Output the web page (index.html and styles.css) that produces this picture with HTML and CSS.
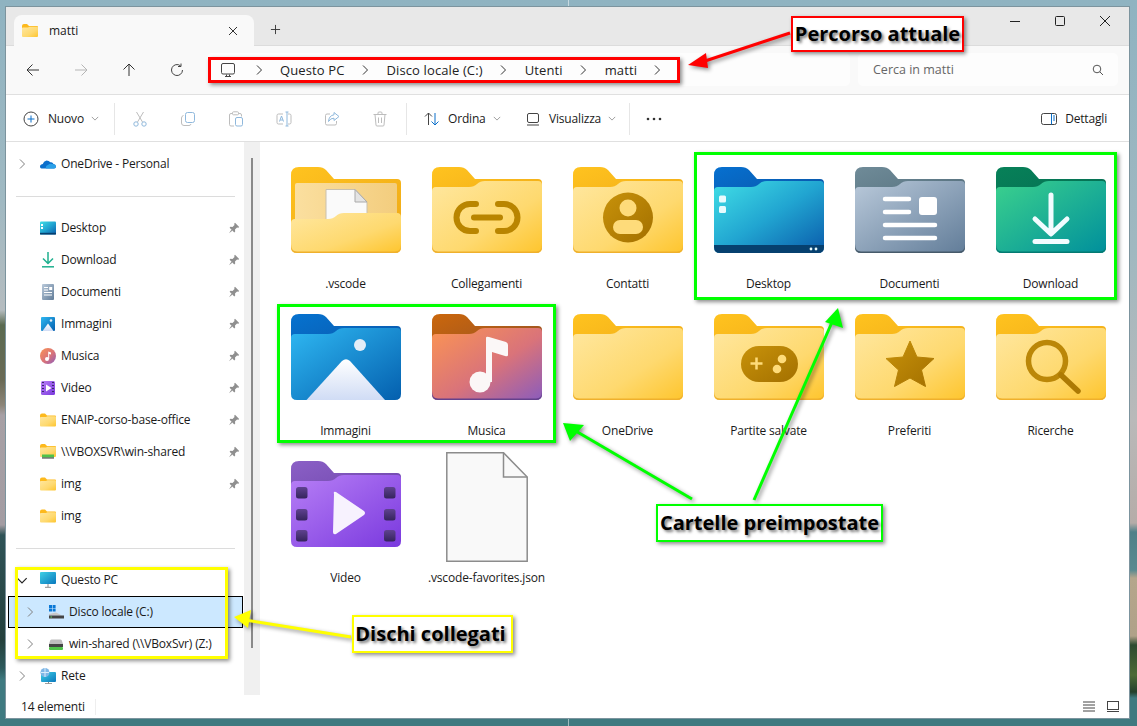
FILE: index.html
```html
<!DOCTYPE html>
<html lang="it">
<head>
<meta charset="utf-8">
<title>matti</title>
<link rel="stylesheet" href="styles.css">
</head>
<body>
<svg class="defs" aria-hidden="true">
  <defs>
    <linearGradient id="yb" x1="0" y1="0" x2="1" y2="1"><stop offset="0" stop-color="#ffc31f"/><stop offset="1" stop-color="#efa917"/></linearGradient>
    <linearGradient id="yf" x1="0" y1="0" x2="1" y2="1"><stop offset="0" stop-color="#ffe79f"/><stop offset=".6" stop-color="#fed96f"/><stop offset="1" stop-color="#fec52d"/></linearGradient>
    <linearGradient id="au" x1="0" y1="0" x2="1" y2="1"><stop offset="0" stop-color="#c8920a"/><stop offset="1" stop-color="#a37000"/></linearGradient>
    <linearGradient id="pp" x1="0" y1="0" x2="1" y2="0"><stop offset="0" stop-color="#fbdf9f"/><stop offset="1" stop-color="#f3cd7e"/></linearGradient>
    <linearGradient id="db" x1="0" y1="0" x2="1" y2="1"><stop offset="0" stop-color="#0670d0"/><stop offset="1" stop-color="#0b4f9e"/></linearGradient>
    <linearGradient id="df" x1="0" y1="0" x2="1" y2="1"><stop offset="0" stop-color="#41dfe6"/><stop offset=".5" stop-color="#21a5d1"/><stop offset="1" stop-color="#0a5bab"/></linearGradient>
    <linearGradient id="cb" x1="0" y1="0" x2="1" y2="1"><stop offset="0" stop-color="#6f8b98"/><stop offset="1" stop-color="#506a78"/></linearGradient>
    <linearGradient id="cf" x1="0" y1="0" x2="1" y2="1"><stop offset="0" stop-color="#b9c9da"/><stop offset="1" stop-color="#627d99"/></linearGradient>
    <linearGradient id="gb" x1="0" y1="0" x2="1" y2="1"><stop offset="0" stop-color="#078158"/><stop offset="1" stop-color="#056a53"/></linearGradient>
    <linearGradient id="gf" x1="0" y1="0" x2="1" y2="1"><stop offset="0" stop-color="#3bd18d"/><stop offset="1" stop-color="#008f9c"/></linearGradient>
    <linearGradient id="ib" x1="0" y1="0" x2="1" y2="1"><stop offset="0" stop-color="#0672cf"/><stop offset="1" stop-color="#0a55a6"/></linearGradient>
    <linearGradient id="if" x1="0" y1="0" x2="1" y2="1"><stop offset="0" stop-color="#2fb8f2"/><stop offset="1" stop-color="#045fae"/></linearGradient>
    <linearGradient id="im" x1="0" y1="0" x2="0" y2="1"><stop offset="0" stop-color="#ffffff"/><stop offset="1" stop-color="#d0dcf5"/></linearGradient>
    <linearGradient id="mb" x1="0" y1="0" x2="1" y2="1"><stop offset="0" stop-color="#cb670c"/><stop offset="1" stop-color="#8f4f28"/></linearGradient>
    <linearGradient id="mf" x1="0" y1="0" x2="1" y2="1"><stop offset="0" stop-color="#fb9453"/><stop offset=".55" stop-color="#d9737a"/><stop offset="1" stop-color="#8b5cbc"/></linearGradient>
    <linearGradient id="vb" x1="0" y1="0" x2="1" y2="1"><stop offset="0" stop-color="#8b60c6"/><stop offset="1" stop-color="#6a42a8"/></linearGradient>
    <linearGradient id="vf" x1="0" y1="0" x2="1" y2="1"><stop offset="0" stop-color="#b77ff6"/><stop offset="1" stop-color="#7a39de"/></linearGradient>
    <linearGradient id="vs" x1="0" y1="0" x2="0" y2="1"><stop offset="0" stop-color="#5f4290"/><stop offset="1" stop-color="#35245c"/></linearGradient>
    <linearGradient id="pc" x1="0" y1="0" x2="1" y2="1"><stop offset="0" stop-color="#3fd0e6"/><stop offset="1" stop-color="#0a78bd"/></linearGradient>
    <path id="back" d="M0 8Q0 0 8 0H27Q32 0 35 3L43 12H106Q110 12 110 16V44H0Z"/>
    <path id="front" d="M0 24Q0 20 4 20H37Q42 20 45 17Q48 14 53 14H106Q110 14 110 18V80Q110 86 104 86H6Q0 86 0 80Z"/>
    <path id="edge" d="M0 77V80Q0 86 6 86H104Q110 86 110 80V77Q110 84.5 104 84.5H6Q0 84.5 0 77Z"/>
    <symbol id="plain" viewBox="0 0 110 86"><use href="#back" fill="url(#yb)"/><use href="#front" fill="url(#yf)"/><use href="#edge" fill="#efb02c"/></symbol>
    <symbol id="mini" viewBox="0 0 16 13"><path d="M0 2Q0 0 2 0H5L7 2H15Q16 2 16 3V6H0Z" fill="#fdb91c"/><path d="M0 4Q0 3.400 1 3.400H6L7.500 2.800H15Q16 2.800 16 3.800V12Q16 13 15 13H1Q0 13 0 12Z" fill="url(#yf)"/></symbol>
    <symbol id="chev" viewBox="0 0 8 12"><path d="M2 1.500 6.500 6 2 10.500" fill="none" stroke="currentColor" stroke-width="1"/></symbol>
    <symbol id="chev-d" viewBox="0 0 10 6"><path d="M1 1 5 5 9 1" fill="none" stroke="currentColor" stroke-width="1"/></symbol>
    <symbol id="pin" viewBox="0 0 12 12"><path d="M7 .8 11.200 5 10.300 5.800 9 5.500 7 7.500 7.200 9.600 6.300 10.400 1.600 5.700 2.400 4.800 4.500 5 6.500 3 6.200 1.700ZM3.300 7.700 4.300 8.700 1 11.200Z" fill="#8f8f8f"/></symbol>
  </defs>
</svg>

<div class="window">
  <header class="tabbar">
    <div class="tab">
      <svg class="tab-ico"><use href="#mini"/></svg>
      <span class="tab-name">matti</span>
      <svg class="tab-x" viewBox="0 0 10 10"><path d="M1 1 9 9M9 1 1 9" stroke="#333" fill="none"/></svg>
    </div>
    <svg class="tab-plus" viewBox="0 0 12 12"><path d="M6 1V11M1 6H11" stroke="#333" fill="none"/></svg>
    <div class="winctl">
      <span class="ctl"><svg viewBox="0 0 10 10"><path d="M0 5.500H10" stroke="#222" fill="none"/></svg></span>
      <span class="ctl"><svg viewBox="0 0 10 10"><rect x=".5" y=".5" width="9" height="9" rx="1" stroke="#222" fill="none"/></svg></span>
      <span class="ctl"><svg viewBox="0 0 10 10"><path d="M0 0 10 10M10 0 0 10" stroke="#222" fill="none"/></svg></span>
    </div>
  </header>

  <nav class="addrrow">
    <span class="navbtn"><svg viewBox="0 0 14 14"><path d="M13 7H1M6.500 1.500 1 7l5.500 5.500" stroke="#333" fill="none"/></svg></span>
    <span class="navbtn"><svg viewBox="0 0 14 14"><path d="M1 7H13M7.500 1.500 13 7l-5.500 5.500" stroke="#b5b5b5" fill="none"/></svg></span>
    <span class="navbtn"><svg viewBox="0 0 14 14"><path d="M7 13V1M1.500 6.500 7 1l5.500 5.500" stroke="#333" fill="none"/></svg></span>
    <span class="navbtn"><svg viewBox="0 0 14 14"><path d="M12.500 7A5.500 5.500 0 1 1 10.500 2.800M11 .5V3.500H8" stroke="#444" fill="none"/></svg></span>
    <div class="address">
      <svg class="crumb-ico" viewBox="0 0 16 16"><rect x="1.500" y="1.500" width="13" height="10.500" rx="1.500" fill="none" stroke="#444"/><path d="M5 14.500H11M6.500 12.500V14.500M9.500 12.500V14.500" stroke="#444" fill="none"/></svg>
      <svg class="crumb-sep first"><use href="#chev"/></svg>
      <span>Questo PC</span>
      <svg class="crumb-sep"><use href="#chev"/></svg>
      <span>Disco locale (C:)</span>
      <svg class="crumb-sep"><use href="#chev"/></svg>
      <span>Utenti</span>
      <svg class="crumb-sep"><use href="#chev"/></svg>
      <span>matti</span>
      <svg class="crumb-sep"><use href="#chev"/></svg>
    </div>
    <div class="search">
      <span>Cerca in matti</span>
      <svg viewBox="0 0 12 12"><circle cx="5" cy="5" r="3.800" fill="none" stroke="#555"/><path d="M7.800 7.800 11 11" stroke="#555" fill="none"/></svg>
    </div>
  </nav>

  <div class="toolbar">
    <div class="tool t-new">
      <svg class="ti" viewBox="0 0 16 16"><circle cx="8" cy="8" r="7" fill="none" stroke="#444"/><path d="M8 4.500V11.500M4.500 8H11.500" stroke="#0a6fc9" fill="none"/></svg>
      <span class="tl">Nuovo</span>
      <svg class="dd"><use href="#chev-d"/></svg>
    </div>
    <i class="vsep"></i>
    <span class="ticon"><svg class="ti" viewBox="0 0 16 16"><path d="M4.500 1 10.500 11M11.500 1 5.500 11" stroke="#bdbdbd" fill="none"/><circle cx="4" cy="13" r="2.200" fill="none" stroke="#8fb8dc"/><circle cx="12" cy="13" r="2.200" fill="none" stroke="#8fb8dc"/></svg></span>
    <span class="ticon"><svg class="ti" viewBox="0 0 16 16"><rect x="5.500" y="1.500" width="9" height="10" rx="2" fill="none" stroke="#8fb8dc"/><path d="M3.500 4.500Q1.500 5 1.500 7V12Q1.500 14.500 4 14.500H9Q10.500 14.500 11 13" fill="none" stroke="#bdbdbd"/></svg></span>
    <span class="ticon"><svg class="ti" viewBox="0 0 16 16"><path d="M4.500 2.500H3Q1.500 2.500 1.500 4V13.500Q1.500 15 3 15H6M10.500 2.500H12Q13.500 2.500 13.500 4V5.500" fill="none" stroke="#bdbdbd"/><rect x="4.500" y=".8" width="6" height="3" rx="1" fill="none" stroke="#bdbdbd"/><rect x="7.500" y="6.500" width="7" height="8.500" rx="1.500" fill="none" stroke="#8fb8dc"/></svg></span>
    <span class="ticon"><svg class="ti" viewBox="0 0 16 16"><path d="M7 3H2.500Q1 3 1 4.500V11.500Q1 13 2.500 13H7M12 3H13.500Q15 3 15 4.500V11.500Q15 13 13.500 13H12" fill="none" stroke="#bdbdbd"/><path d="M3.500 10.500 5.500 5 7.500 10.500M4.200 9H6.800M9.500 1H11M12.500 1H11V15H9.500M11 15H12.500" fill="none" stroke="#8fb8dc"/></svg></span>
    <span class="ticon"><svg class="ti" viewBox="0 0 16 16"><path d="M6 3H3Q1.500 3 1.500 4.500V12.500Q1.500 14 3 14H11Q12.500 14 12.500 12.500V10" fill="none" stroke="#bdbdbd"/><path d="M10 1.500 15 5.500 10 9.500V7.200Q6.500 7 4.500 10.500Q5 4.500 10 3.800Z" fill="none" stroke="#8fb8dc"/></svg></span>
    <span class="ticon"><svg class="ti" viewBox="0 0 16 16"><path d="M1.500 3.500H14.500M6 3.500V2Q6 1 7 1H9Q10 1 10 2V3.500M3 3.500 4 14Q4 15 5 15H11Q12 15 12 14L13 3.500M6.500 6.500V12M9.500 6.500V12" fill="none" stroke="#bdbdbd"/></svg></span>
    <i class="vsep s2"></i>
    <div class="tool t-sort">
      <svg class="ti" viewBox="0 0 16 16"><path d="M4.500 14V2M1 5.500 4.500 2 8 5.500" fill="none" stroke="#444"/><path d="M11 2V14M7.500 10.500 11 14 14.500 10.500" fill="none" stroke="#0a6fc9"/></svg>
      <span class="tl">Ordina</span>
      <svg class="dd"><use href="#chev-d"/></svg>
    </div>
    <div class="tool t-view">
      <svg class="ti" viewBox="0 0 16 16"><rect x="2.500" y="2.500" width="11" height="9" rx="1.500" fill="none" stroke="#444"/><path d="M2 14H14" stroke="#444" fill="none"/></svg>
      <span class="tl">Visualizza</span>
      <svg class="dd"><use href="#chev-d"/></svg>
    </div>
    <i class="vsep"></i>
    <span class="ticon"><svg class="dots" viewBox="0 0 16 4"><circle cx="2" cy="2" r="1.300" fill="#333"/><circle cx="8" cy="2" r="1.300" fill="#333"/><circle cx="14" cy="2" r="1.300" fill="#333"/></svg></span>
    <div class="tool t-det">
      <svg class="ti" viewBox="0 0 16 12"><rect x=".5" y=".5" width="15" height="11" rx="2" fill="none" stroke="#444"/><path d="M10.500 .5V11.500" stroke="#0a6fc9" fill="none"/><path d="M12 3H14M12 5H14M12 7H14" stroke="#0a6fc9" fill="none"/></svg>
      <span class="tl">Dettagli</span>
    </div>
  </div>

  <main class="main">
    <aside class="sidebar">
      <div class="row"><svg class="cv"><use href="#chev"/></svg>
        <svg class="ni" viewBox="0 0 16 16"><path d="M1.500 12.500Q-.5 12 .2 9.500 1 8 2.800 8 3.500 5 6.500 4.500 9 4.500 10.300 6.300 12.500 5.800 13.500 8 15.800 8.300 16 10.500 16 12.500 14 12.500Z" fill="#0a6ecb"/><path d="M6 12.500Q5 10 8 9 10 7 12 8 15.800 8 16 10.500 16 12.500 14 12.500Z" fill="#2aa0e8"/></svg>
        <span class="lbl">OneDrive - Personal</span></div>
      <div class="sep"></div>
      <div class="row"><span class="cv"></span>
        <svg class="ni" viewBox="0 0 16 16"><rect y="1.500" width="16" height="13" rx="1" fill="url(#df)"/><rect y="12.800" width="16" height="1.700" fill="#06406f"/><rect x="1" y="4" width="2" height="2" fill="#fff"/><rect x="1" y="7" width="2" height="2" fill="#fff"/></svg>
        <span class="lbl">Desktop</span><svg class="pin"><use href="#pin"/></svg></div>
      <div class="row"><span class="cv"></span>
        <svg class="ni" viewBox="0 0 16 16"><path d="M8 0V11M3 6.500 8 11.500 13 6.500" fill="none" stroke="#1fb08f" stroke-width="1.500"/><path d="M2 14.800H14" stroke="#1fb08f" stroke-width="1.500"/></svg>
        <span class="lbl">Download</span><svg class="pin"><use href="#pin"/></svg></div>
      <div class="row"><span class="cv"></span>
        <svg class="ni" viewBox="0 0 16 16"><rect x="2" y="0" width="12" height="16" rx="1" fill="url(#cf)"/><path d="M4 3.500H8M4 6H8M4 8.500H12M4 11H12" stroke="#fff" fill="none"/><rect x="9.200" y="3" width="3" height="3" fill="#fff"/></svg>
        <span class="lbl">Documenti</span><svg class="pin"><use href="#pin"/></svg></div>
      <div class="row"><span class="cv"></span>
        <svg class="ni" viewBox="0 0 16 16"><rect x="1" y="1" width="14" height="14" rx="1" fill="url(#if)"/><circle cx="11" cy="4.500" r="1.300" fill="#e4edf7"/><path d="M2.500 15 8 7.500 13.500 15Z" fill="url(#im)"/></svg>
        <span class="lbl">Immagini</span><svg class="pin"><use href="#pin"/></svg></div>
      <div class="row"><span class="cv"></span>
        <svg class="ni" viewBox="0 0 16 16"><circle cx="8" cy="8" r="8" fill="url(#mf)"/><circle cx="7" cy="11" r="2" fill="#fff"/><path d="M8.200 11V3.500L11 4.500V6.500L9.200 6V11Z" fill="#fff"/></svg>
        <span class="lbl">Musica</span><svg class="pin"><use href="#pin"/></svg></div>
      <div class="row"><span class="cv"></span>
        <svg class="ni" viewBox="0 0 16 16"><rect x="1" y="1" width="14" height="14" rx="1.500" fill="url(#vf)"/><path d="M6 4.500 11.500 8 6 11.500Z" fill="#fff"/><path d="M2 2.500H4M2 5.500H4M2 8.500H4M2 11.500H4M12 2.500H14M12 5.500H14M12 8.500H14M12 11.500H14" stroke="#3a2a6a" fill="none"/></svg>
        <span class="lbl">Video</span><svg class="pin"><use href="#pin"/></svg></div>
      <div class="row"><span class="cv"></span><svg class="ni"><use href="#mini"/></svg><span class="lbl">ENAIP-corso-base-office</span><svg class="pin"><use href="#pin"/></svg></div>
      <div class="row"><span class="cv"></span>
        <svg class="ni" viewBox="0 0 16 16"><use href="#mini" width="16" height="13"/><rect x="2" y="10.500" width="12" height="3" fill="#4fc24a"/><rect x="2" y="13.500" width="12" height="1" fill="#333"/></svg>
        <span class="lbl">\\VBOXSVR\win-shared</span><svg class="pin"><use href="#pin"/></svg></div>
      <div class="row"><span class="cv"></span><svg class="ni"><use href="#mini"/></svg><span class="lbl">img</span><svg class="pin"><use href="#pin"/></svg></div>
      <div class="row"><span class="cv"></span><svg class="ni"><use href="#mini"/></svg><span class="lbl">img</span></div>
      <div class="sep"></div>
      <div class="row"><svg class="cv cv-open"><use href="#chev-d"/></svg>
        <svg class="ni" viewBox="0 0 16 16"><rect width="16" height="12" rx="1" fill="url(#pc)"/><path d="M8 12V15M5 15.300H11" stroke="#8a8a8a" fill="none"/></svg>
        <span class="lbl">Questo PC</span></div>
      <div class="row sub sel"><svg class="cv"><use href="#chev"/></svg>
        <svg class="ni" viewBox="0 0 16 16"><path d="M1 1H4V4H1ZM4.600 1H7.600V4H4.600ZM1 4.600H4V7.600H1ZM4.600 4.600H7.600V7.600H4.600Z" fill="#0a78d6"/><path d="M1 10 8 8.500 14 11.500H1Z" fill="#c9c9c9"/><rect x="1" y="11.500" width="15" height="3" fill="#444"/><rect x="2.500" y="12.500" width="1.500" height="1" fill="#5fe05f"/></svg>
        <span class="lbl">Disco locale (C:)</span></div>
      <div class="row sub"><svg class="cv"><use href="#chev"/></svg>
        <svg class="ni" viewBox="0 0 16 16"><path d="M2 5Q2 3.500 3.500 3.500H12.500Q14 3.500 14 5L15 8H1Z" fill="#bdbdbd"/><rect x="1" y="8" width="14" height="3" fill="#444"/><rect x="1" y="11" width="14" height="3" rx="1" fill="#4fc24a"/></svg>
        <span class="lbl">win-shared (\\VBoxSvr) (Z:)</span></div>
      <div class="row"><svg class="cv"><use href="#chev"/></svg>
        <svg class="ni" viewBox="0 0 16 16"><rect x="1" y="4" width="15" height="10" rx="1" fill="url(#pc)"/><path d="M8.500 14V15.500M5 15.700H12" stroke="#8a8a8a" fill="none"/><circle cx="5" cy="4.500" r="4.500" fill="#7fb7e6"/><path d="M1 4.500H9M5 0V9" stroke="#d9ecfb" fill="none"/></svg>
        <span class="lbl">Rete</span></div>
    </aside>
    <div class="scrolltrack"><div class="thumb"></div></div>
    <section class="grid">
      <figure class="item">
        <div class="iconbox"><svg class="folder" viewBox="0 0 110 86">
          <path d="M0 8Q0 0 8 0H27Q32 0 35 3L43 12H106Q110 12 110 16V70H0Z" fill="url(#yb)"/>
          <rect x="4" y="16" width="102" height="44" rx="2" fill="url(#pp)"/>
          <path d="M35 22.500H64L76 35V60H35Z" fill="#fafafa" stroke="#c9c0ae"/>
          <path d="M64 22.500V35H76Z" fill="#e4e4e4" stroke="#aaa"/>
          <path d="M0 56Q0 52 4 52H37Q42 52 45 49Q48 46 53 46H106Q110 46 110 50V80Q110 86 104 86H6Q0 86 0 80Z" fill="url(#yf)"/>
          <use href="#edge" fill="#efb02c"/>
        </svg></div>
        <figcaption>.vscode</figcaption>
      </figure>
      <figure class="item">
        <div class="iconbox"><svg class="folder" viewBox="0 0 110 86"><use href="#plain" width="110" height="86"/>
          <path d="M44 37H38A13.500 13.500 0 0 0 38 64H44M66 37H72A13.500 13.500 0 0 1 72 64H66" fill="none" stroke="#b98500" stroke-width="6" stroke-linecap="round"/>
          <path d="M42 50.500H68" stroke="#b98500" stroke-width="6" stroke-linecap="round"/>
        </svg></div>
        <figcaption>Collegamenti</figcaption>
      </figure>
      <figure class="item">
        <div class="iconbox"><svg class="folder" viewBox="0 0 110 86"><use href="#plain" width="110" height="86"/>
          <circle cx="55" cy="50.500" r="25" fill="url(#au)"/>
          <circle cx="55" cy="41" r="8.500" fill="#fedb7a"/>
          <rect x="40" y="53" width="30" height="14" rx="7" fill="#fedb7a"/>
        </svg></div>
        <figcaption>Contatti</figcaption>
      </figure>
      <figure class="item">
        <div class="iconbox"><svg class="folder" viewBox="0 0 110 86"><use href="#back" fill="url(#db)"/><use href="#front" fill="url(#df)"/>
          <path d="M0 78H110V80Q110 86 104 86H6Q0 86 0 80Z" fill="#06406f"/>
          <rect x="5" y="28.500" width="7" height="7" rx="1.500" fill="#e8fbfd"/><rect x="5" y="39" width="7" height="7" rx="1.500" fill="#e8fbfd"/>
          <circle cx="97" cy="82" r="1.400" fill="#e8fbfd"/><circle cx="102" cy="82" r="1.400" fill="#e8fbfd"/>
        </svg></div>
        <figcaption>Desktop</figcaption>
      </figure>
      <figure class="item">
        <div class="iconbox"><svg class="folder" viewBox="0 0 110 86"><use href="#back" fill="url(#cb)"/><use href="#front" fill="url(#cf)"/><use href="#edge" fill="#465a6a"/>
          <path d="M30 32H54M30 45H54M30 58H80M30 71H80" stroke="#fff" stroke-width="4.500" stroke-linecap="round" fill="none"/>
          <rect x="64" y="30" width="18" height="18" rx="3" fill="#fff"/>
        </svg></div>
        <figcaption>Documenti</figcaption>
      </figure>
      <figure class="item">
        <div class="iconbox"><svg class="folder" viewBox="0 0 110 86"><use href="#back" fill="url(#gb)"/><use href="#front" fill="url(#gf)"/><use href="#edge" fill="#047a72"/>
          <path d="M55 28V66M39 52 55 67 71 52" fill="none" stroke="#f2fcff" stroke-width="5" stroke-linecap="round" stroke-linejoin="round"/>
          <path d="M39 74.500H71" stroke="#f2fcff" stroke-width="5" stroke-linecap="round"/>
        </svg></div>
        <figcaption>Download</figcaption>
      </figure>

      <figure class="item">
        <div class="iconbox"><svg class="folder" viewBox="0 0 110 86"><use href="#back" fill="url(#ib)"/><use href="#front" fill="url(#if)"/>
          <circle cx="69" cy="31" r="6" fill="#e4edf7"/>
          <path d="M15.500 86 51 47Q55 43.500 59 47L94 86Z" fill="url(#im)"/>
        </svg></div>
        <figcaption>Immagini</figcaption>
      </figure>
      <figure class="item">
        <div class="iconbox"><svg class="folder" viewBox="0 0 110 86"><use href="#back" fill="url(#mb)"/><use href="#front" fill="url(#mf)"/><use href="#edge" fill="#64418c"/>
          <circle cx="48" cy="68" r="10.500" fill="#fbf7f7"/>
          <path d="M54 68V24Q54 22 57 23L74 28Q76 29 76 31V41Q76 43 73 42L60 38V68Z" fill="#fbf7f7"/>
        </svg></div>
        <figcaption>Musica</figcaption>
      </figure>
      <figure class="item">
        <div class="iconbox"><svg class="folder"><use href="#plain"/></svg></div>
        <figcaption>OneDrive</figcaption>
      </figure>
      <figure class="item">
        <div class="iconbox"><svg class="folder" viewBox="0 0 110 86"><use href="#plain" width="110" height="86"/>
          <rect x="27" y="32" width="57" height="36" rx="18" fill="url(#au)"/>
          <path d="M36.500 49.500H48.500M42.500 43.500V55.500" stroke="#fedb7a" stroke-width="2.500"/>
          <circle cx="68" cy="45" r="4.300" fill="#fedb7a"/><circle cx="63" cy="55" r="4.300" fill="#fedb7a"/>
        </svg></div>
        <figcaption>Partite salvate</figcaption>
      </figure>
      <figure class="item">
        <div class="iconbox"><svg class="folder" viewBox="0 0 110 86"><use href="#plain" width="110" height="86"/>
          <path d="M55 27 62 43 79 44.500 66.500 56 70.500 72.500 55 64 39.500 72.500 43.500 56 31 44.500 48 43Z" fill="url(#au)" stroke="url(#au)" stroke-linejoin="round"/>
        </svg></div>
        <figcaption>Preferiti</figcaption>
      </figure>
      <figure class="item">
        <div class="iconbox"><svg class="folder" viewBox="0 0 110 86"><use href="#plain" width="110" height="86"/>
          <circle cx="51" cy="47" r="18.500" fill="none" stroke="#bb8708" stroke-width="5.500"/>
          <path d="M65 61 82 77" stroke="#ad7a04" stroke-width="5.500" stroke-linecap="round"/>
        </svg></div>
        <figcaption>Ricerche</figcaption>
      </figure>

      <figure class="item">
        <div class="iconbox"><svg class="folder" viewBox="0 0 110 86"><use href="#back" fill="url(#vb)"/><use href="#front" fill="url(#vf)"/>
          <g fill="url(#vs)"><rect x="5" y="26" width="11.500" height="11.500" rx="2.500"/><rect x="5" y="48" width="11.500" height="11.500" rx="2.500"/><rect x="5" y="69" width="11.500" height="11.500" rx="2.500"/><rect x="93" y="26" width="11.500" height="11.500" rx="2.500"/><rect x="93" y="48" width="11.500" height="11.500" rx="2.500"/><rect x="93" y="69" width="11.500" height="11.500" rx="2.500"/></g>
          <path d="M43 33Q42 30 45 31L73 50Q75 52 73 54L45 73Q42 74 42 71Z" fill="#f7f2fe"/>
        </svg></div>
        <figcaption>Video</figcaption>
      </figure>
      <figure class="item">
        <div class="iconbox"><svg class="file" viewBox="0 0 82 110">
          <path d="M.8.8H57.500L81.200 25V109.200H.8Z" fill="#f9f9f9" stroke="#8c8c8c" stroke-width="1.500"/>
          <path d="M57.500 .8V25H81.200" fill="none" stroke="#8c8c8c" stroke-width="1.500"/>
        </svg></div>
        <figcaption>.vscode-favorites.json</figcaption>
      </figure>
    </section>
  </main>

  <footer class="status">
    <span class="count">14 elementi</span>
    <div class="viewbtns">
      <svg viewBox="0 0 12 10"><path d="M0 .5H12M0 3.500H12M0 6.500H12M0 9.500H12" stroke="#444" fill="none"/></svg>
      <svg viewBox="0 0 12 11"><rect x=".5" y=".5" width="11" height="8" fill="none" stroke="#444"/><path d="M0 10.500H12" stroke="#444" fill="none"/></svg>
    </div>
  </footer>
</div>

<div class="box red addr-mark"></div>
<div class="box green g-top"></div>
<div class="box green g-left"></div>
<div class="box yellow y-disk"></div>
<svg class="arrows" viewBox="0 0 1137 726">
  <g class="a-red"><path d="M790 33 702 62" stroke="#f00" stroke-width="3"/><path d="M688 65 706 53 708 68Z" fill="#f00"/></g>
  <g class="a-green"><path d="M692 499 574 430" stroke="#0f0" stroke-width="3"/><path d="M563 423 584 425 570 441Z" fill="#0f0"/>
  <path d="M754 500 833 320" stroke="#0f0" stroke-width="3"/><path d="M838 308 825 322 843 328Z" fill="#0f0"/></g>
  <g class="a-yellow"><path d="M351 637 245 620" stroke="#ff0" stroke-width="3"/><path d="M234 617 251 610 248 628Z" fill="#ff0"/></g>
</svg>
<div class="callout red c-path">Percorso attuale</div>
<div class="callout green c-preset">Cartelle preimpostate</div>
<div class="callout yellow c-disk">Dischi collegati</div>
</body>
</html>
```

FILE: styles.css
```css
* { box-sizing: border-box; }
html, body { margin: 0; height: 100%; }
body {
  width: 1137px;
  height: 726px;
  overflow: hidden;
  padding: 6px 7px 7px 5px;
  font: 12px/16px "Open Sans", "Noto Sans", sans-serif;
  letter-spacing: -0.18px;
  color: #1a1a1a;
  background:
    linear-gradient(#8fb3c1 0, #a0b9c2 200px, #b5bcbf 310px, #5a6a50 325px, #6a6a55 380px, #8c8578 405px, #a7a0a5 415px, #a39ca2 525px, #2f5357 535px, #24403c 640px, #2d5a5c 668px, #3f7a80 680px, #3f7a80 726px) left / 50% 100% no-repeat,
    linear-gradient(#8fb3c1 0, #a0b8c0 250px, #b9b9b9 420px, #b5aca8 523px, #4f8088 532px, #5a8a90 570px, #b5a68c 578px, #b0a188 636px, #2f4a30 645px, #4d6a35 675px, #24402c 692px, #3f7a80 698px, #3f7a80 726px) right / 50% 100% no-repeat;
}
.defs { position: absolute; width: 0; height: 0; }
.window {
  width: 1125px;
  height: 713px;
  display: flex;
  flex-direction: column;
  border: 1px solid #7c949e;
  background: #fff;
}

/* tabs */
.tabbar { height: 39px; flex: none; display: flex; align-items: flex-start; background: #e8e8e8; border-bottom: 1px solid #dcdcdc; padding: 8px 0 0 8px; }
.tab { width: 240px; height: 31px; display: flex; align-items: center; background: #f9f9f9; border-radius: 8px 8px 0 0; padding: 0 16px 0 8px; }
.tab-ico { width: 16px; height: 13px; }
.tab-name { margin-left: 11px; flex: 1; letter-spacing: 0; }
.tab-x { width: 10px; height: 10px; }
.tab-plus { width: 11px; height: 11px; margin: 9px 0 0 16px; }
.winctl { margin: -8px 2px 0 auto; display: flex; }
.ctl { width: 45px; height: 28px; display: flex; align-items: center; justify-content: center; }
.ctl svg { width: 10px; height: 10px; }

/* address row */
.addrrow { height: 49px; flex: none; display: flex; align-items: center; padding: 0 11px 1px 3px; background: #f9f9f9; border-bottom: 1px solid #e0e0e0; }
.navbtn { width: 48px; display: flex; justify-content: center; }
.navbtn svg { width: 14px; height: 14px; }
.address { width: 643px; height: 33px; margin-left: 6px; display: flex; align-items: center; padding-left: 13px; background: #fdfdfd; border-radius: 5px; font-size: 13px; letter-spacing: .12px; color: #222; }
.crumb-ico { width: 16px; height: 16px; }
.crumb-sep { width: 8px; height: 12px; margin: 0 18px 0 16px; color: #333; }
.crumb-sep.first { margin: 0 17px 0 19px; }
.search { flex: 1; height: 33px; margin-left: 8px; display: flex; align-items: center; justify-content: space-between; padding: 1px 14px 0 15px; background: #fdfdfd; border-radius: 5px; color: #666; font-size: 12.500px; letter-spacing: 0; }
.search svg { width: 12px; height: 12px; }

/* toolbar */
.toolbar { height: 47px; flex: none; display: flex; align-items: center; padding-top: 1px; background: #fff; border-bottom: 1px solid #e0e0e0; }
.tool { display: flex; align-items: center; flex: none; }
.ti { width: 16px; height: 16px; flex: none; }
.tl { margin-left: 8px; }
.dd { width: 8px; height: 5px; margin-left: 7px; color: #888; }
.t-new { width: 108px; padding-left: 17px; }
.t-new .tl { margin-left: 9px; }
.vsep { width: 1px; height: 32px; background: #e6e6e6; flex: none; }
.vsep.s2 { margin-left: 2px; }
.t-new + .vsep { margin-right: 1px; }
.ticon { width: 48px; display: flex; justify-content: center; flex: none; }
.t-sort { width: 108px; padding-left: 17px; }
.t-view { width: 114px; padding-left: 10px; }
.dots { width: 16px; height: 4px; }
.t-det { margin-left: auto; padding-right: 22px; }
.t-det .ti { height: 12px; }

/* main */
.main { flex: 1; min-height: 0; display: flex; }
.sidebar { width: 238px; flex: none; padding-top: 6px; overflow: hidden; background: #fff; }
.row { height: 32px; display: flex; align-items: center; padding-left: 10px; padding-right: 4px; }
.row.sub { padding-left: 18px; }
.row.sel { margin: 0 1px 0 2px; padding-left: 15px; background: #cce8ff; border: 1px solid #000; padding-right: 3px; }
.cv { width: 12px; height: 12px; flex: none; color: #808080; }
.cv-open { color: #222; height: 7px; }
.ni { width: 16px; height: 16px; margin-left: 12px; flex: none; }
.lbl { margin-left: 5px; white-space: nowrap; }
.pin { width: 12px; height: 12px; margin-left: auto; }
.sep { height: 1px; margin: 16px 9px 15px 10px; background: #dcdcdc; }
.scrolltrack { width: 16px; flex: none; background: #f0f0f0; padding: 16px 0 47px 7px; }
.thumb { width: 2px; height: 100%; background: #8a8a8a; }

/* grid */
.grid { flex: 1; display: grid; grid-template-columns: repeat(6, 141px); grid-auto-rows: 147px; align-content: start; padding: 10px 0 0 15px; background: #fff; }
.item { margin: 0; display: flex; flex-direction: column; align-items: center; }
.iconbox { height: 110px; margin-top: 6px; display: flex; justify-content: center; align-items: flex-start; }
.folder { width: 110px; height: 86px; margin-top: 9px; }
.file { width: 82px; height: 110px; }
figcaption { margin-top: 8px; text-align: center; white-space: nowrap; }

/* status */
.status { height: 23px; flex: none; display: flex; align-items: center; padding: 0 10px 0 15px; background: #fff; }
.count { padding-right: 10px; border-right: 1px solid #eee; }
.viewbtns { margin-left: auto; display: flex; gap: 12px; }
.viewbtns svg { width: 12px; height: 11px; }

/* annotations */
.box, .callout { position: absolute; box-shadow: 2px 2px 4px rgba(0,0,0,.45); }
.box { border-width: 3px; border-style: solid; }
.box.red { border-color: #f00; }
.box.green { border-color: #0f0; }
.box.yellow { border-color: #ff0; }
.addr-mark { left: 208px; top: 57px; width: 472px; height: 26px; }
.g-top { left: 694px; top: 152px; width: 423px; height: 148px; }
.g-left { left: 277px; top: 304px; width: 279px; height: 139px; }
.y-disk { left: 15px; top: 567px; width: 213px; height: 92px; }
.arrows { position: absolute; left: 0; top: 0; width: 1137px; height: 726px; }
.arrows g { filter: drop-shadow(2px 2px 2px rgba(0,0,0,.45)); }
.callout { display: flex; align-items: center; justify-content: center; background: #fff; border: 2px solid; font-weight: 700; font-size: 20px; letter-spacing: 0; color: #000; text-shadow: 2px 2px 3px rgba(0,0,0,.55); white-space: nowrap; }
.callout.red { border-color: #f00; }
.callout.green { border-color: #0f0; }
.callout.yellow { border-color: #ff0; }
.c-path { left: 791px; top: 16px; width: 173px; height: 36px; }
.c-preset { left: 656px; top: 504px; width: 227px; height: 38px; }
.c-disk { left: 352px; top: 615px; width: 161px; height: 38px; padding-right: 4px; }
```
